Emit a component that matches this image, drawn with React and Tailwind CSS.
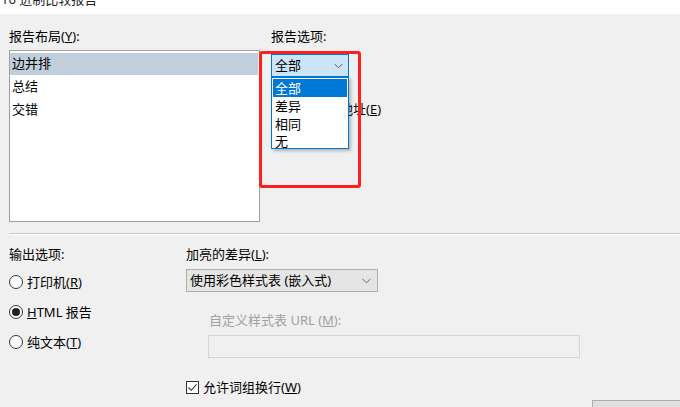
import React from "react";

const font = { fontFamily: '"Noto Sans", "Noto Sans CJK SC", sans-serif' };

function Chevron({ className = "" }) {
  return (
    <svg width="9" height="6" viewBox="0 0 9 6" className={className}>
      <path d="M0.5 0.8 L4.5 4.8 L8.5 0.8" fill="none" stroke="#606060" strokeWidth="1" />
    </svg>
  );
}

function Radio({ checked, children }) {
  return (
    <div className="flex items-center h-[20px] gap-[4px]">
      <div className="w-[14px] h-[14px] rounded-full border border-[#333] bg-white flex items-center justify-center">
        {checked && <div className="w-[8px] h-[8px] rounded-full bg-[#222]" />}
      </div>
      <span className="text-[13px] leading-[16px] text-black">{children}</span>
    </div>
  );
}

function Checkbox({ checked, children }) {
  return (
    <div className="flex items-center h-[16px] gap-[4px]">
      <div className="w-[13px] h-[13px] border border-[#333] bg-white flex items-center justify-center">
        {checked && (
          <svg width="11" height="11" viewBox="0 0 11 11">
            <path d="M1.5 5.5 L4.2 8.3 L9.6 2.3" fill="none" stroke="#333" strokeWidth="1.1" />
          </svg>
        )}
      </div>
      <span className="text-[13px] leading-[16px] text-black whitespace-nowrap">{children}</span>
    </div>
  );
}

export default function App() {
  return (
    <div
      className="relative w-[680px] h-[407px] bg-[#f0f0f0] overflow-hidden flex flex-col text-black"
      style={font}
    >
      {/* title bar */}
      <div className="h-[14px] bg-white overflow-hidden shrink-0">
        <div className="pl-[1px] -mt-[9px] text-[13px] leading-[16px] text-[#222]">16 进制比较报告</div>
      </div>

      {/* upper section */}
      <div className="flex pl-[9px] pt-[14px] shrink-0">
        <div className="flex flex-col w-[262px]">
          <div className="text-[13px] leading-[16px]">
            报告布局(<span className="underline">Y</span>):
          </div>
          <div className="mt-[6px] w-[251px] h-[172px] border border-[#a0a0a0] bg-white pt-[2px]">
            <div className="h-[22px] bg-[#c1cfdc] flex items-center pl-[2px] text-[13px] mr-[1px]">边并排</div>
            <div className="h-[23px] flex items-center pl-[2px] text-[13px]">总结</div>
            <div className="h-[23px] flex items-center pl-[2px] text-[13px]">交错</div>
          </div>
        </div>
        <div className="flex flex-col">
          <div className="text-[13px] leading-[16px]">报告选项:</div>
          <div className="mt-[10px] w-[78px] h-[23px] border border-[#0078d7] bg-[#cce4f7] flex items-center justify-between pl-[3px] pr-[5px] text-[13px]">
            <span>全部</span>
            <Chevron />
          </div>
          <div className="mt-[24px]">
            <Checkbox checked>显示偏移地址(<span className="underline">E</span>)</Checkbox>
          </div>
        </div>
      </div>

      {/* separator */}
      <div className="ml-[9px] mt-[11px] h-[1px] bg-[#c8c8c8] border-b border-white shrink-0 box-content" />

      {/* lower section */}
      <div className="flex pl-[9px] pt-[11px] shrink-0">
        <div className="flex flex-col w-[177px]">
          <div className="text-[13px] leading-[16px]">输出选项:</div>
          <div className="mt-[10px] flex flex-col gap-[10px]">
            <Radio>打印机(<span className="underline">R</span>)</Radio>
            <Radio checked><span className="underline">H</span>TML 报告</Radio>
            <Radio>纯文本(<span className="underline">T</span>)</Radio>
          </div>
        </div>
        <div className="flex flex-col">
          <div className="text-[13px] leading-[16px]">
            加亮的差异(<span className="underline">L</span>):
          </div>
          <div className="mt-[7px] w-[192px] h-[23px] border border-[#adadad] bg-[#e5e5e5] flex items-center justify-between pl-[3px] pr-[6px] text-[13px]">
            <span>使用彩色样式表 (嵌入式)</span>
            <Chevron />
          </div>
          <div className="ml-[23px] mt-[20px] text-[13px] leading-[16px] text-[#a0a0a0]">
            自定义样式表 URL (<span className="underline">M</span>):
          </div>
          <div className="ml-[22px] mt-[7px] w-[372px] h-[23px] border border-[#d6d6d6] bg-[#f0f0f0]" />
          <div className="mt-[21px]">
            <Checkbox checked>允许词组换行(<span className="underline">W</span>)</Checkbox>
          </div>
        </div>
      </div>

      {/* footer buttons */}
      <div className="pl-[592px] mt-[5px] shrink-0">
        <div className="w-[100px] h-[23px] border border-[#adadad] bg-[#e1e1e1]" />
      </div>

      {/* open dropdown list */}
      <div className="absolute left-[271px] top-[77px] w-[78px] h-[72px] bg-white border border-[#0078d7] shadow-[2px_2px_3px_rgba(0,0,0,0.25)] p-[1px] text-[13px]">
        <div className="h-[18px] leading-[18px] pl-[2px] bg-[#0078d7] text-white">全部</div>
        <div className="h-[18px] leading-[18px] pl-[2px]">差异</div>
        <div className="h-[18px] leading-[18px] pl-[2px]">相同</div>
        <div className="h-[16px] leading-[16px] pl-[2px]">无</div>
      </div>

      {/* red highlight annotation */}
      <div className="absolute left-[259px] top-[51px] w-[102px] h-[137px] border-[3px] border-[#ff1f1f] rounded-[3px]" />
    </div>
  );
}
